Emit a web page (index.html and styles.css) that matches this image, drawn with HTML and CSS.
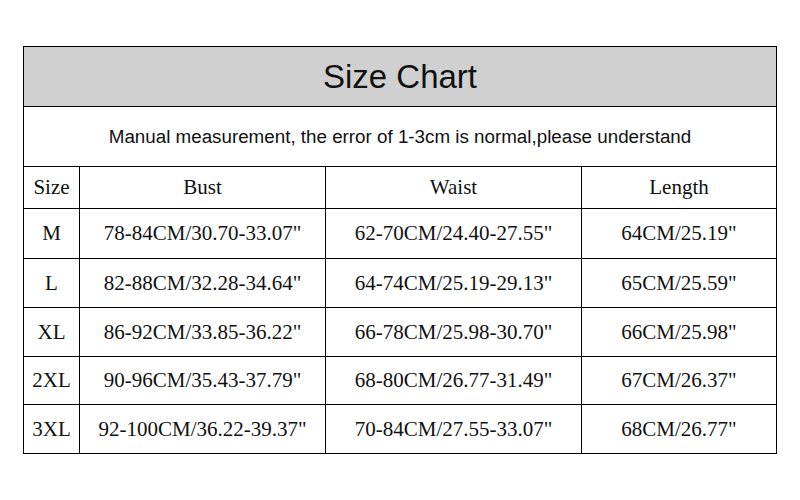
FILE: index.html
```html
<!DOCTYPE html>
<html>
<head>
<meta charset="utf-8">
<link rel="stylesheet" href="styles.css">
</head>
<body>
<table class="chart">
  <colgroup>
    <col class="c-size">
    <col class="c-bust">
    <col class="c-waist">
    <col class="c-length">
  </colgroup>
  <tr class="r-title"><td colspan="4" class="title">Size Chart</td></tr>
  <tr class="r-note"><td colspan="4" class="note">Manual measurement, the error of 1-3cm is normal,please understand</td></tr>
  <tr class="r-head"><td>Size</td><td>Bust</td><td>Waist</td><td>Length</td></tr>
  <tr class="r-data r1"><td>M</td><td>78-84CM/30.70-33.07"</td><td>62-70CM/24.40-27.55"</td><td>64CM/25.19"</td></tr>
  <tr class="r-data r2"><td>L</td><td>82-88CM/32.28-34.64"</td><td>64-74CM/25.19-29.13"</td><td>65CM/25.59"</td></tr>
  <tr class="r-data r3"><td>XL</td><td>86-92CM/33.85-36.22"</td><td>66-78CM/25.98-30.70"</td><td>66CM/25.98"</td></tr>
  <tr class="r-data r4"><td>2XL</td><td>90-96CM/35.43-37.79"</td><td>68-80CM/26.77-31.49"</td><td>67CM/26.37"</td></tr>
  <tr class="r-data r5"><td>3XL</td><td>92-100CM/36.22-39.37"</td><td>70-84CM/27.55-33.07"</td><td>68CM/26.77"</td></tr>
</table>
</body>
</html>
```
FILE: styles.css
```css
html, body {
  margin: 0;
  padding: 0;
  background: #fff;
}
.chart {
  margin: 46px 0 0 23px;
  border-collapse: collapse;
  table-layout: fixed;
  width: 753px;
  font-family: "Liberation Serif", "Times New Roman", serif;
  font-size: 21px;
  color: #111;
}
.c-size { width: 56px; }
.c-bust { width: 246px; }
.c-waist { width: 256px; }
.c-length { width: 195px; }
.chart td {
  border: 1px solid #000;
  padding: 0;
  text-align: center;
  vertical-align: middle;
  white-space: nowrap;
}
.r-title { height: 60px; }
.r-note { height: 60px; }
.r-head { height: 42px; }
.r1 { height: 50px; }
.r2 { height: 49px; }
.r3 { height: 49px; }
.r4 { height: 48px; }
.r5 { height: 49px; }
.title {
  background: #d0d0d0;
  font-family: "Liberation Sans", Arial, sans-serif;
  font-size: 33px;
}
.note {
  font-family: "Liberation Sans", Arial, sans-serif;
  font-size: 18.8px;
}
```
